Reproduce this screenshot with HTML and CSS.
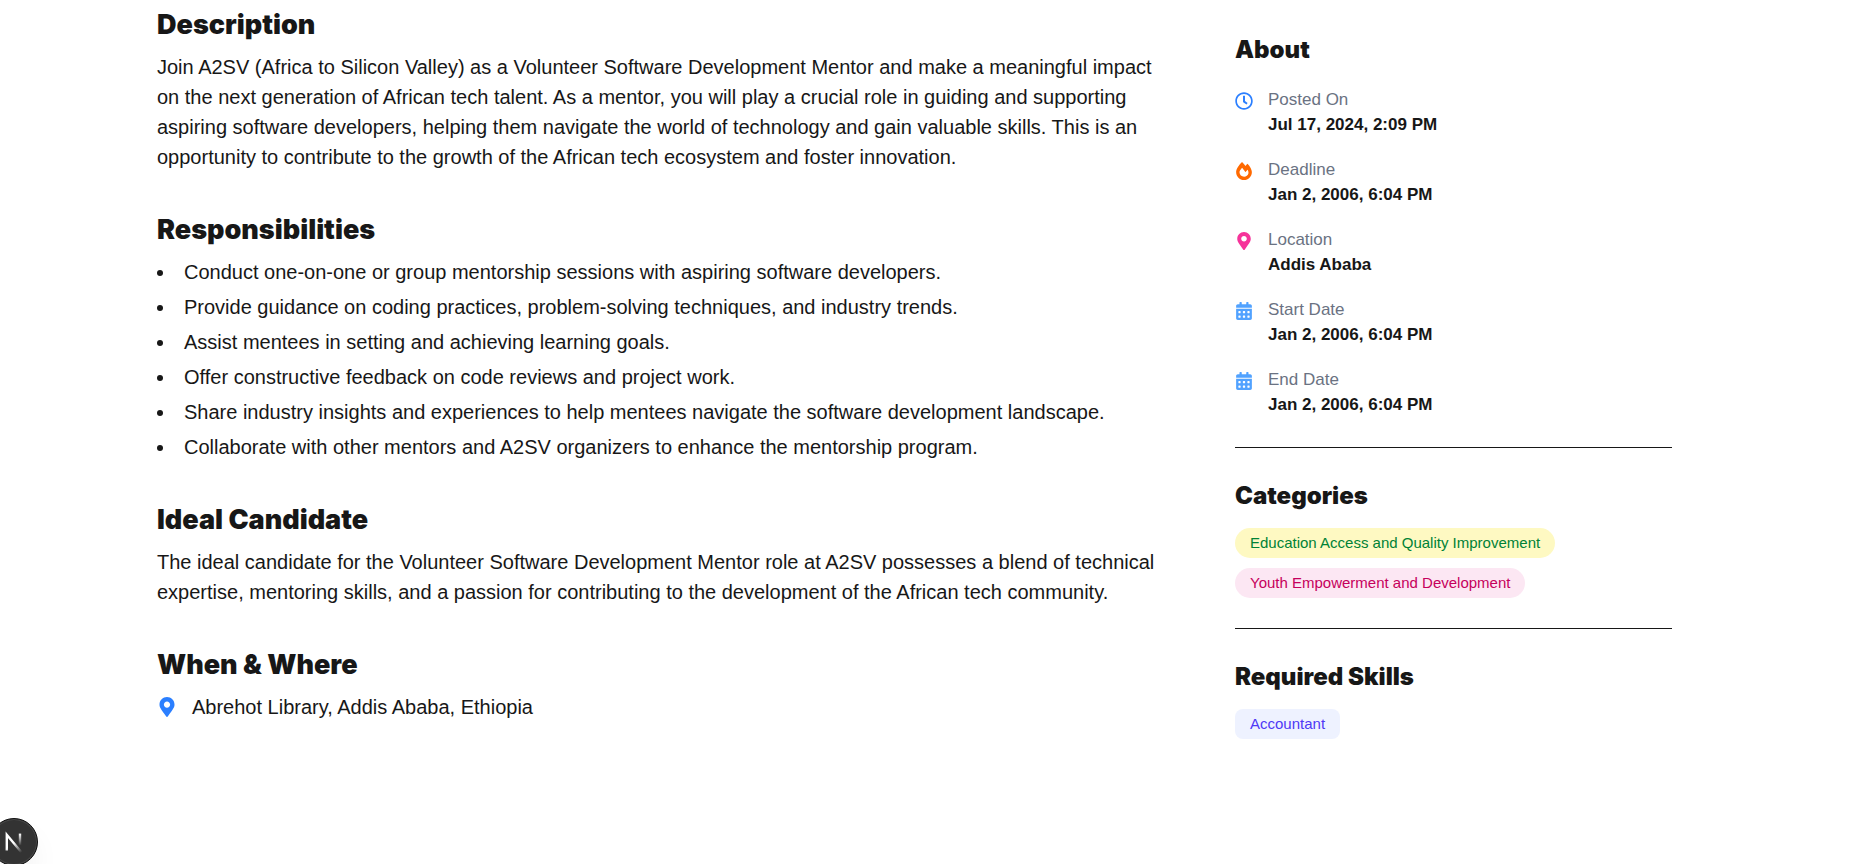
FILE: index.html
```html
<!DOCTYPE html>
<html lang="en">
<head>
<meta charset="utf-8">
<meta name="viewport" content="width=device-width, initial-scale=1">
<title>Volunteer Software Development Mentor</title>
<link rel="stylesheet" href="styles.css">
</head>
<body>
<svg class="sprite" aria-hidden="true">
  <symbol id="clock" viewBox="0 0 512 512"><path d="M256 8C119 8 8 119 8 256s111 248 248 248 248-111 248-248S393 8 256 8zm0 448c-110.500 0-200-89.500-200-200S145.500 56 256 56s200 89.500 200 200-89.500 200-200 200zm61.800-104.400l-84.900-61.700c-3.100-2.300-4.900-5.900-4.900-9.700V116c0-6.600 5.400-12 12-12h32c6.600 0 12 5.400 12 12v141.700l66.800 48.600c5.400 3.900 6.500 11.400 2.600 16.800L334.600 349c-3.900 5.300-11.400 6.500-16.800 2.600z"/></symbol>
  <symbol id="fire" viewBox="0 0 448 512"><path d="M323.560 51.200c-20.800 19.300-39.580 39.590-56.220 59.970C240.080 73.620 206.280 35.530 168 0 69.740 91.170 0 209.960 0 281.600 0 408.850 100.290 512 224 512s224-103.150 224-230.400c0-53.270-51.980-163.140-124.440-230.400zm-19.470 340.650C282.430 407.010 255.720 416 226.860 416 154.710 416 96 368.260 96 290.750c0-38.610 24.310-72.630 72.790-130.750 6.930 7.980 98.830 125.340 98.830 125.340l58.630-66.880c4.140 6.850 7.910 13.550 11.270 19.970 27.350 52.190 15.810 118.970-33.430 153.420z"/></symbol>
  <symbol id="pin" viewBox="0 0 384 512"><path d="M172.268 501.670C26.970 291.031 0 269.413 0 192 0 85.961 85.961 0 192 0s192 85.961 192 192c0 77.413-26.970 99.031-172.268 309.670-9.535 13.774-29.930 13.773-39.464 0zM192 272c44.183 0 80-35.817 80-80s-35.817-80-80-80-80 35.817-80 80 35.817 80 80 80z"/></symbol>
  <symbol id="calendar" viewBox="0 0 448 512"><path fill-rule="evenodd" d="M0 464c0 26.500 21.500 48 48 48h352c26.500 0 48-21.500 48-48V192H0zM76 256h40q12 0 12 12v40q0 12-12 12H76q-12 0-12-12v-40q0-12 12-12zM204 256h40q12 0 12 12v40q0 12-12 12h-40q-12 0-12-12v-40q0-12 12-12zM332 256h40q12 0 12 12v40q0 12-12 12h-40q-12 0-12-12v-40q0-12 12-12zM76 384h40q12 0 12 12v40q0 12-12 12H76q-12 0-12-12v-40q0-12 12-12zM204 384h40q12 0 12 12v40q0 12-12 12h-40q-12 0-12-12v-40q0-12 12-12zM332 384h40q12 0 12 12v40q0 12-12 12h-40q-12 0-12-12v-40q0-12 12-12z"/><path d="M400 64h-48V16c0-8.800-7.200-16-16-16h-32c-8.800 0-16 7.200-16 16v48H160V16c0-8.800-7.200-16-16-16h-32c-8.800 0-16 7.200-16 16v48H48C21.500 64 0 85.500 0 112v48h448v-48c0-26.500-21.500-48-48-48z"/></symbol>
</svg>

<div class="page">
  <main class="content">
    <section class="section">
      <h2 class="title">Description</h2>
      <p class="text">Join A2SV (Africa to Silicon Valley) as a Volunteer Software Development Mentor and make a meaningful impact on the next generation of African tech talent. As a mentor, you will play a crucial role in guiding and supporting aspiring software developers, helping them navigate the world of technology and gain valuable skills. This is an opportunity to contribute to the growth of the African tech ecosystem and foster innovation.</p>
    </section>
    <section class="section">
      <h2 class="title">Responsibilities</h2>
      <ul class="duties">
        <li>Conduct one-on-one or group mentorship sessions with aspiring software developers.</li>
        <li>Provide guidance on coding practices, problem-solving techniques, and industry trends.</li>
        <li>Assist mentees in setting and achieving learning goals.</li>
        <li>Offer constructive feedback on code reviews and project work.</li>
        <li>Share industry insights and experiences to help mentees navigate the software development landscape.</li>
        <li>Collaborate with other mentors and A2SV organizers to enhance the mentorship program.</li>
      </ul>
    </section>
    <section class="section">
      <h2 class="title">Ideal Candidate</h2>
      <p class="text">The ideal candidate for the Volunteer Software Development Mentor role at A2SV possesses a blend of technical expertise, mentoring skills, and a passion for contributing to the development of the African tech community.</p>
    </section>
    <section class="section">
      <h2 class="title">When &amp; Where</h2>
      <p class="text place"><svg class="icon icon-large blue" aria-hidden="true"><use href="#pin"/></svg>Abrehot Library, Addis Ababa, Ethiopia</p>
    </section>
  </main>

  <aside class="sidebar">
    <section class="panel">
      <h3 class="subtitle">About</h3>
      <ul class="facts">
        <li class="fact"><svg class="icon blue" aria-hidden="true"><use href="#clock"/></svg><div><p class="label">Posted On</p><p class="value">Jul 17, 2024, 2:09 PM</p></div></li>
        <li class="fact"><svg class="icon orange" aria-hidden="true"><use href="#fire"/></svg><div><p class="label">Deadline</p><p class="value">Jan 2, 2006, 6:04 PM</p></div></li>
        <li class="fact"><svg class="icon pink" aria-hidden="true"><use href="#pin"/></svg><div><p class="label">Location</p><p class="value">Addis Ababa</p></div></li>
        <li class="fact"><svg class="icon sky" aria-hidden="true"><use href="#calendar"/></svg><div><p class="label">Start Date</p><p class="value">Jan 2, 2006, 6:04 PM</p></div></li>
        <li class="fact"><svg class="icon sky" aria-hidden="true"><use href="#calendar"/></svg><div><p class="label">End Date</p><p class="value">Jan 2, 2006, 6:04 PM</p></div></li>
      </ul>
    </section>
    <section class="panel">
      <h3 class="subtitle">Categories</h3>
      <div class="tags">
        <span class="tag tag-yellow">Education Access and Quality Improvement</span>
        <span class="tag tag-pink">Youth Empowerment and Development</span>
      </div>
    </section>
    <section class="panel">
      <h3 class="subtitle">Required Skills</h3>
      <div class="tags">
        <span class="tag tag-skill">Accountant</span>
      </div>
    </section>
  </aside>
</div>

<button class="dev-button" type="button" aria-label="Open developer tools">
  <svg class="dev-logo" viewBox="0 0 20 20" fill="none" aria-hidden="true">
    <defs>
      <linearGradient id="fade-diagonal" gradientUnits="userSpaceOnUse" x1="11" y1="10" x2="17" y2="18"><stop stop-color="#fff"/><stop offset="1" stop-color="#fff" stop-opacity="0"/></linearGradient>
      <linearGradient id="fade-stem" gradientUnits="userSpaceOnUse" x1="15" y1="3" x2="15" y2="13"><stop stop-color="#fff"/><stop offset="1" stop-color="#fff" stop-opacity="0"/></linearGradient>
    </defs>
    <path d="M4 17V4L16.500 19" stroke="url(#fade-diagonal)" stroke-width="2"/>
    <path d="M15 3v10" stroke="url(#fade-stem)" stroke-width="2"/>
  </svg>
</button>
</body>
</html>
```
FILE: styles.css
```css
* {
  box-sizing: border-box;
  margin: 0;
  padding: 0;
}

body {
  background: #fff;
  color: #171717;
  font-family: "Liberation Sans", Arial, Helvetica, sans-serif;
  font-size: 20px;
  line-height: 30px;
}

.sprite {
  display: none;
}

.page {
  display: grid;
  grid-template-columns: minmax(0, 1fr) 437px;
  gap: 76px;
  padding: 7px 181px 40px 157px;
}

.content {
  display: flex;
  flex-direction: column;
  gap: 40px;
}

.section {
  display: flex;
  flex-direction: column;
  gap: 10px;
}

.title,
.subtitle {
  font-family: Inter, "Liberation Sans", sans-serif;
  font-weight: 900;
  line-height: 35px;
}

.title {
  font-size: 27px;
}

.subtitle {
  font-size: 24px;
}

.duties {
  display: flex;
  flex-direction: column;
  gap: 5px;
  list-style: disc inside;
}

.place {
  display: flex;
  align-items: center;
  gap: 15px;
}

.icon {
  flex: none;
  width: 18px;
  height: 18px;
  margin-top: 5px;
  fill: currentColor;
}

.icon-large {
  width: 20px;
  height: 20px;
  margin-top: 0;
}

.blue { color: #2b7fff; }
.orange { color: #ff6900; }
.pink { color: #f6339a; }
.sky { color: #51a2ff; }

.sidebar {
  padding-top: 25px;
}

.panel + .panel {
  margin-top: 30px;
  padding-top: 30px;
  border-top: 1px solid #171717;
}

.facts {
  display: flex;
  flex-direction: column;
  gap: 20px;
  margin-top: 20px;
  list-style: none;
}

.fact {
  display: flex;
  gap: 15px;
  font-size: 17px;
  line-height: 25px;
}

.label {
  color: #6a7282;
}

.value {
  font-weight: 700;
}

.tags {
  display: flex;
  flex-direction: column;
  align-items: flex-start;
  gap: 10px;
  margin-top: 15px;
}

.tag {
  padding: 5px 15px;
  border-radius: 15px;
  font-size: 15px;
  line-height: 20px;
}

.tag-yellow {
  background: #fef9c2;
  color: #008236;
}

.tag-pink {
  background: #fce7f3;
  color: #c6005c;
}

.tag-skill {
  border-radius: 8px;
  background: #eef2ff;
  color: #4f39f6;
}

.dev-button {
  position: fixed;
  bottom: -2px;
  left: -10px;
  display: grid;
  place-items: center;
  width: 48px;
  height: 48px;
  border: 1px solid #111;
  border-radius: 50%;
  background: #333;
  box-shadow: inset 0 0 0 1px #484848, 0 16px 32px -8px rgba(0, 0, 0, 0.1);
}

.dev-logo {
  width: 24px;
  height: 24px;
}
```
